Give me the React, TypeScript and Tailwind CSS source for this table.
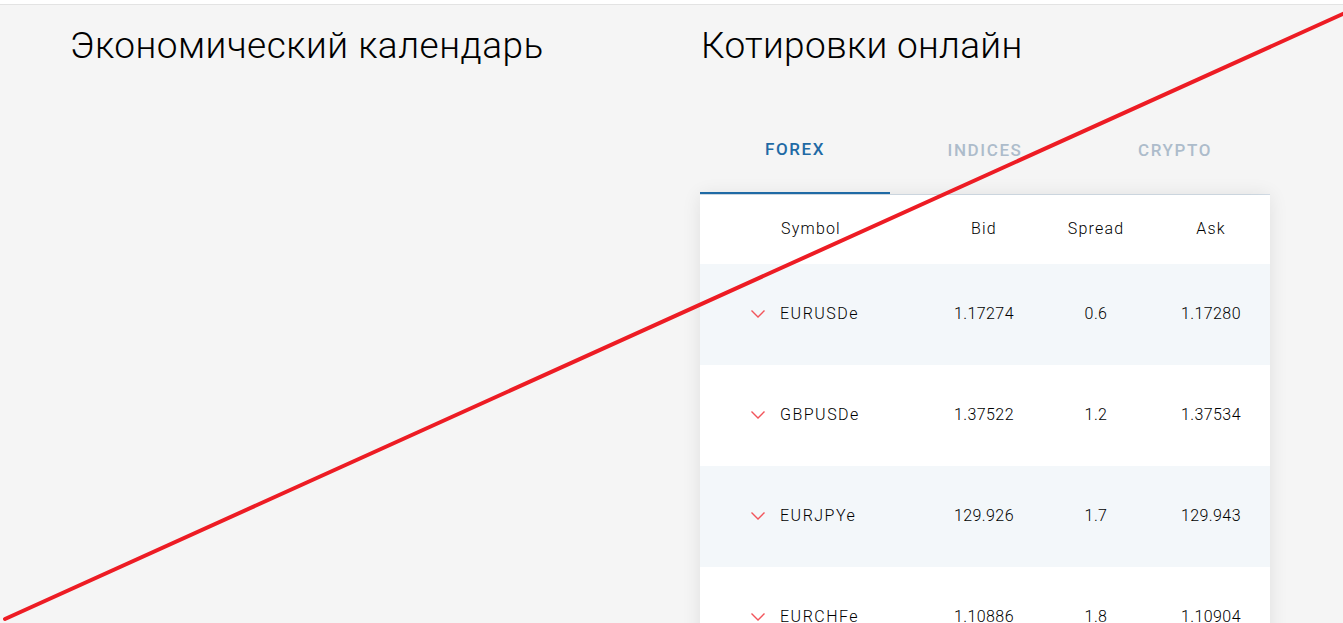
import React from "react";

const rows = [
  { s: "EURUSDe", bid: "1.17274", spread: "0.6", ask: "1.17280" },
  { s: "GBPUSDe", bid: "1.37522", spread: "1.2", ask: "1.37534" },
  { s: "EURJPYe", bid: "129.926", spread: "1.7", ask: "129.943" },
  { s: "EURCHFe", bid: "1.10886", spread: "1.8", ask: "1.10904" },
];

function Chevron() {
  return (
    <svg width="16" height="10" viewBox="0 0 16 10" className="shrink-0">
      <path d="M1.5 1.5 L8 8 L14.5 1.5" fill="none" stroke="#f2545b" strokeWidth="1.4" />
    </svg>
  );
}

export default function App() {
  const font = { fontFamily: "Roboto, 'Noto Sans', sans-serif" };
  return (
    <div className="relative h-[623px] w-full overflow-hidden bg-white" style={font}>
      <div className="h-[4px] bg-white" />
      <div className="h-[619px] border-t border-[#e3e3e3] bg-[#f5f5f5]">
        <div className="flex pt-[19px]">
          <div className="w-[700px] pl-[70px]">
            <h2 className="text-[37px] font-light leading-[1.2] tracking-[0.5px] text-black">Экономический календарь</h2>
          </div>
          <div className="w-[570px]">
            <h2 className="pl-[1px] text-[37px] font-light leading-[1.2] tracking-[0.3px] text-black">Котировки онлайн</h2>
            <div className="mt-[37px] flex border-b border-[#d5dfe9]">
              <div className="-mb-px flex h-[89px] w-[190px] items-center justify-center border-b-2 border-[#1f6aa5] pt-[2px] text-[17px] font-medium tracking-[1.6px] text-[#1f6aa5]">
                FOREX
              </div>
              <div className="flex h-[89px] w-[190px] items-center justify-center pt-[2px] text-[17px] font-medium tracking-[1.6px] text-[#adbccb]">
                INDICES
              </div>
              <div className="flex h-[89px] w-[190px] items-center justify-center pt-[2px] text-[17px] font-medium tracking-[1.6px] text-[#adbccb]">
                CRYPTO
              </div>
            </div>
            <div className="bg-white text-[16px] font-light tracking-[0.4px] text-black shadow-[0_0_18px_rgba(0,0,0,0.09)]">
              <div className="grid h-[69px] grid-cols-[228px_112px_112px_118px] items-center pb-[2px] tracking-[1.2px]">
                <div className="pl-[81px]">Symbol</div>
                <div className="text-center">Bid</div>
                <div className="text-center">Spread</div>
                <div className="text-center">Ask</div>
              </div>
              {rows.map((r, i) => (
                <div
                  key={r.s}
                  className={`grid h-[101px] grid-cols-[228px_112px_112px_118px] items-center pb-[2px] ${i % 2 === 0 ? "bg-[#f3f7fa]" : "bg-white"}`}
                >
                  <div className="flex items-center gap-[14px] pl-[50px]">
                    <Chevron />
                    <span className="tracking-[1.5px]">{r.s}</span>
                  </div>
                  <div className="text-center">{r.bid}</div>
                  <div className="text-center">{r.spread}</div>
                  <div className="text-center">{r.ask}</div>
                </div>
              ))}
            </div>
          </div>
        </div>
      </div>
      <svg className="pointer-events-none absolute left-0 top-0" width="1343" height="623">
        <line x1="5" y1="619" x2="1345" y2="13" stroke="#ed1c24" strokeWidth="4" strokeLinecap="round" />
      </svg>
    </div>
  );
}
